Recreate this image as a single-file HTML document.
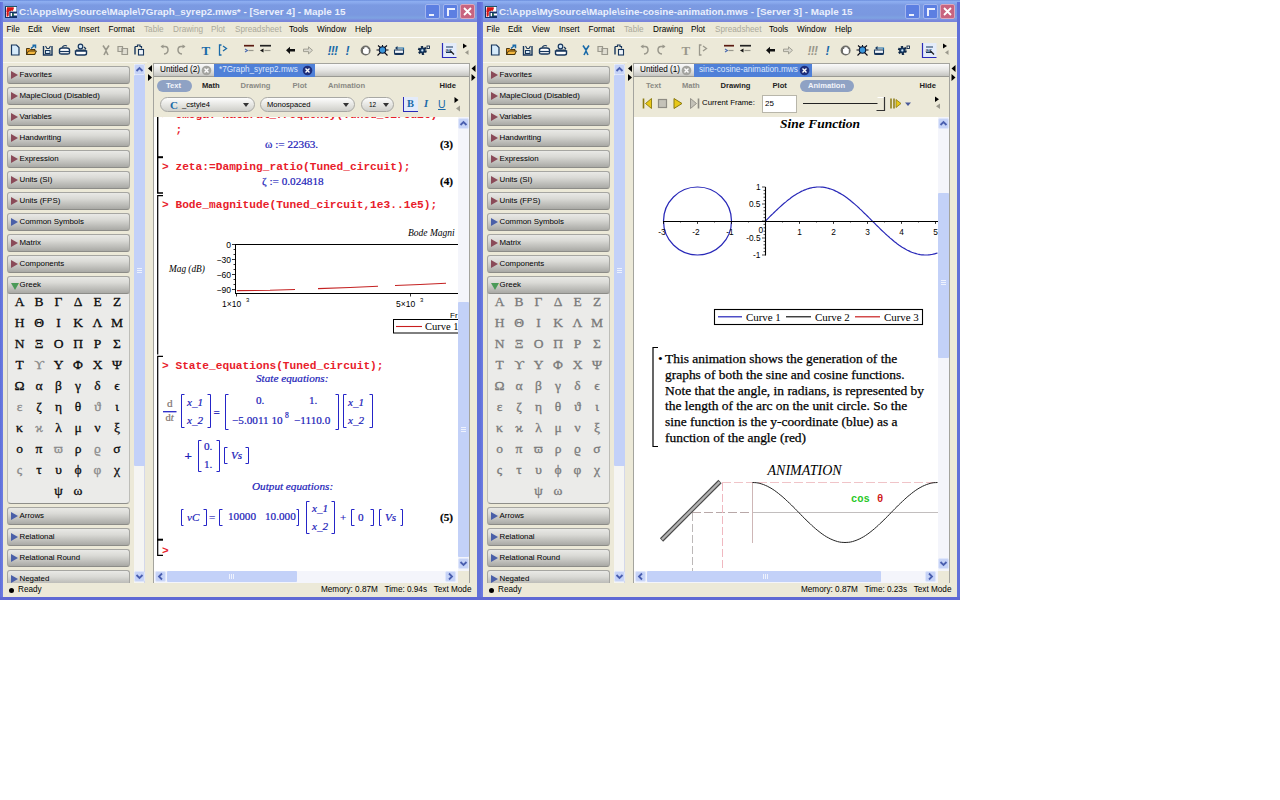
<!DOCTYPE html>
<html lang="en"><head><meta charset="utf-8"><title>Maple 15</title><style>
*{box-sizing:border-box;margin:0;padding:0}
html,body{width:1280px;height:800px;background:#fff;overflow:hidden}
body{position:relative;font-family:"Liberation Sans",sans-serif;font-size:8px;color:#000}
.win{position:absolute;top:0;width:480px;height:600px;background:#ece9d8;overflow:hidden}
.abs{position:absolute}
.title{position:absolute;left:0;top:0;width:480px;height:22px;background:linear-gradient(#6a8ddc 0,#8cadf0 1.5px,#88a8ec 3px,#7b9ae2 5px,#7a98e0 15px,#7ea3e2 18px,#7a88dc 20.500px,#7884da 22px)}
.bl{position:absolute;left:0;top:2px;width:3px;height:598px;background:linear-gradient(90deg,#5f6fd8,#6f7ee2)}
.br{position:absolute;left:477px;top:2px;width:3px;height:598px;background:#6070d8}
.bb{position:absolute;left:0;top:597px;width:480px;height:3px;background:#5f69d4}
.ttext{position:absolute;left:19px;top:6.4px;font:bold 9.9px "Liberation Sans",sans-serif;color:#e9effc;white-space:pre;line-height:12px}
.cbtn{position:absolute;top:4px;width:15px;height:15px;border:1px solid #a3b6ee;border-radius:2px;background:#5c7fe2}
.menu span{position:absolute;top:24px;font-size:8.2px;line-height:12px;white-space:pre}
.menu .g{color:#aaa89a}
.msep{position:absolute;left:3px;top:37px;width:474px;height:1px;background:#fdfdfb}
.pbtn{position:absolute;left:7px;width:123px;height:18px;border-radius:3px;border:1px solid #a6a6a2;border-bottom-color:#8c8c88;background:linear-gradient(#e9e9e6 0,#dadad6 35%,#bcbcb8 75%,#a9a9a5 100%);font-size:7.9px;line-height:16px;white-space:pre}
.pbtn i{position:absolute;left:3px;top:4px;width:0;height:0;border-left:7px solid #8a4a58;border-top:4px solid transparent;border-bottom:4px solid transparent}
.pbtn i.b{border-left-color:#4a5fa8}
.pbtn i.d{left:3px;top:6px;border-left:4px solid transparent;border-right:4px solid transparent;border-top:7px solid #4a9a58;border-bottom:0}
.pbtn b{position:absolute;left:11.5px;top:0;font-weight:normal}
.vs{position:absolute;width:11px;background:#f4f5fb}
.sbtn{position:absolute;width:11px;height:11px;background:#c6d3f7;border:1px solid #dfe6fb;border-radius:2px}
.thumb{position:absolute;background:#c3d1f8;border-radius:1px}
.g td{}
.gk{position:absolute;font:13.5px "Liberation Serif","DejaVu Serif",serif;line-height:14px;width:20px;text-align:center;color:#0c0c0c;-webkit-text-stroke:0.3px currentColor}
.doc{position:absolute;left:154px;top:116.500px;width:304px;height:454px;background:#fff;overflow:hidden}
.code{position:absolute;font:bold 11.2px "Liberation Mono",monospace;color:#e8202a;white-space:pre;line-height:13px}
.m{position:absolute;font:11.2px "Liberation Serif",serif;color:#2020b8;white-space:pre;line-height:13px;-webkit-text-stroke:0.2px currentColor}
.mi{font-style:italic}
.k{color:#000}
.ctx span{position:absolute;top:81.2px;font:bold 7.6px "Liberation Sans",sans-serif;line-height:10px;white-space:pre;color:#8a8a84}
.combo{position:absolute;top:97px;height:15px;border-radius:8px;border:1px solid #a8a8a4;background:linear-gradient(#fdfdfd,#e2e2de 60%,#cfcfca);font-size:7.6px;line-height:13px;white-space:pre}
.st{position:absolute;top:585px;font-size:8.2px;line-height:10px;white-space:pre}
</style></head><body>
<div class="win" style="left:0px">
<div class="title"></div><div class="bl"></div><div class="br"></div><div class="bb"></div>
<svg class="abs" style="left:4.5px;top:6px" width="12" height="12" viewBox="0 0 12 12"><rect width="12" height="12" rx="0.5" fill="#12306a"/><rect x="0.5" y="0" width="11" height="1" fill="#1a5a6a"/><rect x="1" y="1" width="10.5" height="10" fill="#fff"/><path d="M2 1.3 h6.5 l0.5 0.7 l-1.2 3.2 l-1-1 l-1 1.3 l-1.5-0.5 v1 l-1 0.5 l1 0.8 l-1 0.8 l1 0.8 l-1 0.8 v0.8 h-2 l0.6-0.8 l-0.6-0.8 l0.6-0.8 l-0.6-0.8 l0.6-0.8 l-0.6-0.8z" fill="#d41616"/><path d="M4.3 5.6 h7.7 v6.4 h-7.7z" fill="#12306a"/><path d="M5.6 7 h1.5 v3.2 h-1.5z M8.6 7.6 h3.4 v2 h-3.4z" fill="#fff"/><rect x="7.3" y="7.4" width="1.3" height="2.6" fill="#146a3a"/></svg>
<div class="ttext">C:\Apps\MySource\Maple\7Graph_syrep2.mws* - [Server 4] - Maple 15</div>
<div class="cbtn" style="left:425px"><div class="abs" style="left:3px;top:9px;width:5px;height:2px;background:#eef2fd"></div></div>
<div class="cbtn" style="left:443px"><div class="abs" style="left:3px;top:3px;width:8px;height:8px;border-left:2px solid #eef2fd;border-top:2px solid #eef2fd"></div></div>
<div class="cbtn" style="left:460px;background:#c8637f;border-color:#dca6bc"><svg class="abs" style="left:2px;top:2px" width="9" height="9" viewBox="0 0 9 9"><path d="M1 1L8 8M8 1L1 8" stroke="#fff" stroke-width="1.8"/></svg></div>
<div class="menu"><span style="left:6.5px">File</span><span style="left:28px">Edit</span><span style="left:52px">View</span><span style="left:79px">Insert</span><span style="left:108.5px">Format</span><span style="left:144px" class=g>Table</span><span style="left:173px" class=g>Drawing</span><span style="left:211px" class=g>Plot</span><span style="left:235px" class=g>Spreadsheet</span><span style="left:289px">Tools</span><span style="left:317px">Window</span><span style="left:355px">Help</span></div>
<div class="msep"></div>
<svg class="abs" style="left:0;top:38px" width="480" height="24" viewBox="0 38 480 24"><path d="M11.5 45 h5 l2.5 2.5 v7.5 h-7.5z" fill="#d6ebfa" stroke="#17365c" stroke-width="1.2"/><path d="M26.5 54.5 v-6 h3 l1 1 h4.5 v5z" fill="#e89a20" stroke="#3a2a08" stroke-width="0.9"/><path d="M26.5 54.5 l2-3.5 h8 l-2 3.5z" fill="#f4b840" stroke="#3a2a08" stroke-width="0.9"/><path d="M31 48.5 l3.5-3 M32.5 45.3 h3 v3" fill="none" stroke="#1a6aa8" stroke-width="1.5"/><path d="M43.5 46 v9 h8.5 v-9" fill="none" stroke="#17365c" stroke-width="1.4"/><path d="M45.5 46 l1.5 2.5 h2 l1.5-2.5" fill="none" stroke="#17365c" stroke-width="1.1"/><rect x="45.5" y="50.5" width="4.5" height="3" fill="#d6ebfa" stroke="#17365c" stroke-width="1"/><path d="M59.5 50 q0-2 3-2 h4 q3 0 3 2 v3 q0 1-2 1 h-6 q-2 0-2-1z" fill="#fff" stroke="#17365c" stroke-width="1.4"/><path d="M62 47.5 q2-3 5-1.5" fill="none" stroke="#17365c" stroke-width="1.2"/><path d="M60 51.5h10" stroke="#17365c" stroke-width="1.2"/><circle cx="80.5" cy="46.5" r="2.3" fill="#d6ebfa" stroke="#17365c" stroke-width="1.2"/><path d="M75.5 51 h11 v2.5 q0 1.5-2 1.5 h-7 q-2 0-2-1.5z" fill="#fff" stroke="#17365c" stroke-width="1.4"/><path d="M76 50.2h10" stroke="#17365c" stroke-width="1.4"/><path d="M84 47l2 2" stroke="#17365c" stroke-width="1.2"/><path d="M103 45.5 l3 4.5 l3-4.5 M106 50 v2 M106 51 l-2 4 M106 51 l2 4" fill="none" stroke="#9a988c" stroke-width="1.6"/><path d="M118 46.5 h4.5 v5 h-4.5z M122 48.5 h5.5 v6 h-5.5z" fill="#e0ded2" stroke="#9a988c" stroke-width="1.2"/><path d="M135 46.5 v8" stroke="#17365c" stroke-width="1.4"/><path d="M135 46.5 h2.5 v-1.5 h2.5 v1.5 h1.5 v2" fill="none" stroke="#17365c" stroke-width="1.2"/><rect x="138.5" y="49.5" width="5" height="5.5" fill="#eef4fa" stroke="#17365c" stroke-width="1.1"/><path d="M161.5 46.5 h3.5 q3 0 3 3.5 q0 3.5-4 4" fill="none" stroke="#9a988c" stroke-width="1.5"/><path d="M160.5 46.5 l3-2 v4z" fill="#9a988c"/><path d="M184.5 46.5 h-3.5 q-3 0-3 3.5 q0 3.5 4 4" fill="none" stroke="#9a988c" stroke-width="1.5"/><path d="M185.5 46.5 l-3-2 v4z" fill="#9a988c"/><text x="201.5" y="55" font-family="Liberation Serif,serif" font-weight="bold" font-size="13" fill="#1a6aa8">T</text><path d="M221.5 45 h-2 v10 h2 M223 46 l3.5 2.5 l-3.5 2.5" fill="none" stroke="#1a6aa8" stroke-width="1.3"/><path d="M244 45.7 h10" stroke="#5a1a10" stroke-width="1.7"/><path d="M245 49 l2.5 1.5 l-2.5 1.5" fill="none" stroke="#4a6ab0" stroke-width="1.1"/><path d="M248.5 50.5 h5" fill="none" stroke="#9a988c" stroke-width="1.2"/><path d="M260 45.7 h11" stroke="#222" stroke-width="1.7"/><path d="M263.5 48.5 l-3.5 2 l3.5 2z" fill="#111"/><path d="M264.5 50.5 h6" fill="none" stroke="#9a988c" stroke-width="1.2"/><path d="M286 50.3 l4-3.5 v2.3 h5 v2.5 h-5 v2.3z" fill="#111"/><path d="M312.5 50.3 l-4-3.5 v2.3 h-5 v2.5 h5 v2.3z" fill="#dcdad0" stroke="#9a988c" stroke-width="0.9"/><text x="327.5" y="54.5" font-family="Liberation Sans,sans-serif" font-weight="bold" font-style="italic" font-size="12" fill="#1a6aa8" letter-spacing="-0.8">!!!</text><text x="345.5" y="54.5" font-family="Liberation Sans,sans-serif" font-weight="bold" font-style="italic" font-size="12" fill="#1a6aa8">!</text><circle cx="365.6" cy="50.5" r="5" fill="#6e6e6a"/><path d="M363 52.5 v-3.5 h1.2 v-1.5 h1.2 v-0.5 h1.2 v0.7 h1.2 v1.3 h1 v3.5 q0 1.5-2.5 1.5 q-2.3 0-3.3-1.5z" fill="#fff"/><path d="M378 45.5l3 2.5M387 45.5l-3 2.5M376.5 50h3M385.5 50h3M377.5 55.5l3-3M387.5 55.5l-3-3M382.5 45v2" stroke="#0a0a14" stroke-width="1.1"/><circle cx="382.5" cy="50" r="3.2" fill="#3c98dc" stroke="#0a1a3a" stroke-width="1.1"/><path d="M394.5 50 h9 v3 q0 1.5-1.5 1.5 h-6 q-1.5 0-1.5-1.5z" fill="#f2f6fa" stroke="#17365c" stroke-width="1.1"/><path d="M394.5 53.8 h9" stroke="#17365c" stroke-width="1.8"/><path d="M396 48 h7.5 v2" fill="none" stroke="#1a6aa8" stroke-width="1.2"/><path d="M395 48 l2.5-2 v4z" fill="#17365c"/><circle cx="422.3" cy="50.4" r="3.1" fill="none" stroke="#0e2646" stroke-width="2.8" stroke-dasharray="1.9 1.35"/><circle cx="422.3" cy="50.4" r="2.7" fill="#16406e" stroke="#0e2646" stroke-width="1"/><circle cx="422.3" cy="50.4" r="1.1" fill="#cfe2f2"/><rect x="427" y="46" width="2.5" height="2.5" fill="#f4f4ee" stroke="#0e2646" stroke-width="0.9"/><rect x="442.5" y="43" width="14" height="14" fill="#e4ecfa"/><path d="M442.5 43 v14.5 h14" fill="none" stroke="#2a2ab8" stroke-width="1.2"/><path d="M446 47h7M446 52.5h6" stroke="#17365c" stroke-width="1"/><text x="445.5" y="52" font-family="Liberation Sans,sans-serif" font-size="6" fill="#17365c">ac</text><path d="M450 50.5 l4 4" stroke="#222" stroke-width="1.3"/><path d="M463 43.5 v5 l4-2.5z" fill="#000"/><path d="M468.5 50 v5 l-3.5-2.5z" fill="#9a988c"/></svg>
<div class="abs" style="left:3px;top:62px;width:144px;height:521px;overflow:hidden"><div class="abs" style="left:0;top:0;width:144px;height:1px;background:#f8f6ee"></div>
<div class="abs" style="left:-3px;top:-62px;width:150px;height:645px">
<div class="abs" style="left:7px;top:290px;width:123px;height:213.5px;background:#ebebe9;border:1px solid #bdbdb8;border-bottom-color:#8e8e8a;border-radius:0 0 4px 4px"></div>
<div class="pbtn" style="top:66px"><i class=""></i><b>Favorites</b></div>
<div class="pbtn" style="top:87px"><i class=""></i><b>MapleCloud (Disabled)</b></div>
<div class="pbtn" style="top:108px"><i class=""></i><b>Variables</b></div>
<div class="pbtn" style="top:129px"><i class=""></i><b>Handwriting</b></div>
<div class="pbtn" style="top:150px"><i class=""></i><b>Expression</b></div>
<div class="pbtn" style="top:171px"><i class=""></i><b>Units (SI)</b></div>
<div class="pbtn" style="top:192px"><i class=""></i><b>Units (FPS)</b></div>
<div class="pbtn" style="top:213px"><i class="b"></i><b>Common Symbols</b></div>
<div class="pbtn" style="top:234px"><i class=""></i><b>Matrix</b></div>
<div class="pbtn" style="top:255px"><i class=""></i><b>Components</b></div>
<div class="pbtn" style="top:276px"><i class="d"></i><b>Greek</b></div>
<div class="pbtn" style="top:507px"><i class="b"></i><b>Arrows</b></div>
<div class="pbtn" style="top:528px"><i class="b"></i><b>Relational</b></div>
<div class="pbtn" style="top:549px"><i class="b"></i><b>Relational Round</b></div>
<div class="pbtn" style="top:570px"><i class="b"></i><b>Negated</b></div>
<span class="gk" style="left:9.5px;top:294.9px">Α</span>
<span class="gk" style="left:29px;top:294.9px">Β</span>
<span class="gk" style="left:48.5px;top:294.9px">Γ</span>
<span class="gk" style="left:68px;top:294.9px">Δ</span>
<span class="gk" style="left:87.5px;top:294.9px">Ε</span>
<span class="gk" style="left:107px;top:294.9px">Ζ</span>
<span class="gk" style="left:9.5px;top:315.9px">Η</span>
<span class="gk" style="left:29px;top:315.9px">Θ</span>
<span class="gk" style="left:48.5px;top:315.9px">Ι</span>
<span class="gk" style="left:68px;top:315.9px">Κ</span>
<span class="gk" style="left:87.5px;top:315.9px">Λ</span>
<span class="gk" style="left:107px;top:315.9px">Μ</span>
<span class="gk" style="left:9.5px;top:336.9px">Ν</span>
<span class="gk" style="left:29px;top:336.9px">Ξ</span>
<span class="gk" style="left:48.5px;top:336.9px">Ο</span>
<span class="gk" style="left:68px;top:336.9px">Π</span>
<span class="gk" style="left:87.5px;top:336.9px">Ρ</span>
<span class="gk" style="left:107px;top:336.9px">Σ</span>
<span class="gk" style="left:9.5px;top:357.9px">Τ</span>
<span class="gk" style="left:29px;top:357.9px;color:#8a8a8a">ϒ</span>
<span class="gk" style="left:48.5px;top:357.9px">Υ</span>
<span class="gk" style="left:68px;top:357.9px">Φ</span>
<span class="gk" style="left:87.5px;top:357.9px">Χ</span>
<span class="gk" style="left:107px;top:357.9px">Ψ</span>
<span class="gk" style="left:9.5px;top:378.9px">Ω</span>
<span class="gk" style="left:29px;top:378.9px">α</span>
<span class="gk" style="left:48.5px;top:378.9px">β</span>
<span class="gk" style="left:68px;top:378.9px">γ</span>
<span class="gk" style="left:87.5px;top:378.9px">δ</span>
<span class="gk" style="left:107px;top:378.9px">ϵ</span>
<span class="gk" style="left:9.5px;top:399.9px;color:#8a8a8a">ε</span>
<span class="gk" style="left:29px;top:399.9px">ζ</span>
<span class="gk" style="left:48.5px;top:399.9px">η</span>
<span class="gk" style="left:68px;top:399.9px">θ</span>
<span class="gk" style="left:87.5px;top:399.9px;color:#8a8a8a">ϑ</span>
<span class="gk" style="left:107px;top:399.9px">ι</span>
<span class="gk" style="left:9.5px;top:420.9px">κ</span>
<span class="gk" style="left:29px;top:420.9px;color:#8a8a8a">ϰ</span>
<span class="gk" style="left:48.5px;top:420.9px">λ</span>
<span class="gk" style="left:68px;top:420.9px">μ</span>
<span class="gk" style="left:87.5px;top:420.9px">ν</span>
<span class="gk" style="left:107px;top:420.9px">ξ</span>
<span class="gk" style="left:9.5px;top:441.9px">ο</span>
<span class="gk" style="left:29px;top:441.9px">π</span>
<span class="gk" style="left:48.5px;top:441.9px;color:#8a8a8a">ϖ</span>
<span class="gk" style="left:68px;top:441.9px">ρ</span>
<span class="gk" style="left:87.5px;top:441.9px;color:#8a8a8a">ϱ</span>
<span class="gk" style="left:107px;top:441.9px">σ</span>
<span class="gk" style="left:9.5px;top:462.9px;color:#8a8a8a">ς</span>
<span class="gk" style="left:29px;top:462.9px">τ</span>
<span class="gk" style="left:48.5px;top:462.9px">υ</span>
<span class="gk" style="left:68px;top:462.9px">ϕ</span>
<span class="gk" style="left:87.5px;top:462.9px;color:#8a8a8a">φ</span>
<span class="gk" style="left:107px;top:462.9px">χ</span>
<span class="gk" style="left:48.5px;top:483.9px">ψ</span>
<span class="gk" style="left:68px;top:483.9px">ω</span>
</div></div>
<div class="vs" style="left:134px;top:64px;height:519px;background:#f5f5f3;border-right:1px solid #d4d8ea"></div>
<div class="thumb" style="left:134px;top:75px;width:11px;height:391px"></div>
<div class="sbtn" style="left:134px;top:64px"></div><svg class="abs" style="left:134px;top:64px" width="11" height="11" viewBox="0 0 11 11"><path d="M2.5 7 L5.5 4 L8.5 7" fill="none" stroke="#4a5fb0" stroke-width="1.8"/></svg>
<div class="sbtn" style="left:134px;top:571px"></div><svg class="abs" style="left:134px;top:571px" width="11" height="11" viewBox="0 0 11 11"><path d="M2.5 4 L5.5 7 L8.5 4" fill="none" stroke="#4a5fb0" stroke-width="1.8"/></svg>
<div class="abs" style="left:137px;top:268px;width:5px;height:1px;background:#eef2fd;box-shadow:0 2px 0 #eef2fd,0 4px 0 #eef2fd"></div>
<svg class="abs" style="left:147px;top:64px" width="6" height="20" viewBox="0 0 6 20"><path d="M5 1v7l-4-3.5z M1 10v7l4-3.5z" fill="#000"/></svg>
<svg class="abs" style="left:470px;top:64px" width="7" height="20" viewBox="0 0 7 20"><path d="M5.5 1v7l-4-3.5z M1.5 10v7l4-3.5z" fill="#000"/></svg>
<div class="abs" style="left:153px;top:63px;width:317px;height:520px;border:1px solid #a4a49e;border-bottom:0;background:#ece9d8"></div>
<div class="abs" style="left:154px;top:64px;width:315px;height:13px;background:linear-gradient(#fafafa,#e6e6e4 50%,#c4c4c0);border-bottom:1px solid #9a9a94"></div>
<div class="abs" style="left:155px;top:64px;width:59px;height:13px;font-size:8.2px;line-height:12px;padding-left:5px;white-space:pre">Untitled (2)</div>
<svg class="abs" style="left:201px;top:65px" width="11" height="11" viewBox="0 0 11 11"><circle cx="5.5" cy="5.5" r="4.8" fill="#a4a4a0"/><path d="M3.5 3.5l4 4M7.5 3.5l-4 4" stroke="#fff" stroke-width="1.4"/></svg>
<div class="abs" style="left:214px;top:64px;width:101px;height:13px;background:#4f80d8;color:#dfe8fa;font-size:8.2px;line-height:12px;padding-left:5px;white-space:pre">*7Graph_syrep2.mws</div>
<svg class="abs" style="left:302px;top:65px" width="11" height="11" viewBox="0 0 11 11"><circle cx="5.5" cy="5.5" r="4.8" fill="#1e2e7a"/><path d="M3.5 3.5l4 4M7.5 3.5l-4 4" stroke="#fff" stroke-width="1.4"/></svg>
<div class="abs" style="left:157px;top:80px;width:35px;height:12px;border-radius:6px;background:#8fa2c4"></div>
<div class="ctx"><span style="left:166px;color:#f2f4fa">Text</span><span style="left:202px;color:#222">Math</span><span style="left:240.5px;">Drawing</span><span style="left:292.5px;">Plot</span><span style="left:328px;">Animation</span><span style="left:439.5px;color:#222">Hide</span></div>
<div class="abs" style="left:154px;top:116.5px;width:315px;height:466.5px;background:#fff"></div>
<div class="vs" style="left:458px;top:117px;height:454px"></div>
<div class="sbtn" style="left:458px;top:118px"></div><svg class="abs" style="left:458px;top:118px" width="11" height="11" viewBox="0 0 11 11"><path d="M2.5 7 L5.5 4 L8.5 7" fill="none" stroke="#4a5fb0" stroke-width="1.8"/></svg>
<div class="sbtn" style="left:458px;top:558px"></div><svg class="abs" style="left:458px;top:558px" width="11" height="11" viewBox="0 0 11 11"><path d="M2.5 4 L5.5 7 L8.5 4" fill="none" stroke="#4a5fb0" stroke-width="1.8"/></svg>
<div class="abs" style="left:154px;top:571px;width:304px;height:12px;background:#f4f5fb"></div>
<div class="abs" style="left:458px;top:571px;width:11px;height:12px;background:#ece9d8"></div>
<div class="sbtn" style="left:155px;top:571px"></div><svg class="abs" style="left:155px;top:571px" width="11" height="11" viewBox="0 0 11 11"><path d="M7 2.5 L4 5.5 L7 8.5" fill="none" stroke="#4a5fb0" stroke-width="1.8"/></svg>
<div class="sbtn" style="left:445px;top:571px"></div><svg class="abs" style="left:445px;top:571px" width="11" height="11" viewBox="0 0 11 11"><path d="M4 2.5 L7 5.5 L4 8.5" fill="none" stroke="#4a5fb0" stroke-width="1.8"/></svg>
<div class="combo" style="left:160px;width:95px"><span class="abs" style="left:9px;top:0.5px;font:bold 11px 'Liberation Serif',serif;color:#1a6aa8">C</span><span class="abs" style="left:21px;top:0">_cstyle4</span><span class="abs" style="left:82px;top:5px;border-top:4px solid #333;border-left:3.5px solid transparent;border-right:3.5px solid transparent"></span></div>
<div class="combo" style="left:260px;width:95px"><span class="abs" style="left:6px;top:0">Monospaced</span><span class="abs" style="left:82px;top:5px;border-top:4px solid #333;border-left:3.5px solid transparent;border-right:3.5px solid transparent"></span></div>
<div class="combo" style="left:361px;width:33px"><span class="abs" style="left:7px;top:0;font-size:6.5px">12</span><span class="abs" style="left:21px;top:5px;border-top:4px solid #333;border-left:3.5px solid transparent;border-right:3.5px solid transparent"></span></div>
<div class="abs" style="left:403px;top:97px;width:15px;height:15px;background:#e3ebfa;border-left:1px solid #2a2ab8;border-bottom:1px solid #2a2ab8"></div>
<span class="abs" style="left:407px;top:98px;font:bold 10.5px 'Liberation Serif',serif;color:#1a6aa8;line-height:12px">B</span>
<span class="abs" style="left:424px;top:98px;font:italic bold 10.5px 'Liberation Serif',serif;color:#1a6aa8;line-height:12px">I</span>
<span class="abs" style="left:438px;top:98px;font:10.5px 'Liberation Sans',sans-serif;color:#1a6aa8;line-height:12px;text-decoration:underline">U</span>
<svg class="abs" style="left:452px;top:96px" width="10" height="18" viewBox="0 0 10 18"><path d="M2.5 1v6l4-3z" fill="#000"/><path d="M8 9.5v6l-4-3z" fill="#9a988c"/></svg>
<div class="doc"><div class="abs" style="left:-154px;top:-116.5px;width:480px;height:600px">
<span class="code" style="left:162px;top:109px">&gt; omega:=Natural_frequency(Tuned_circuit)</span>
<span class="code" style="left:175.5px;top:123.5px">;</span>
<span class="m " style="left:265px;top:137.8px;">ω := 22363.</span>
<span class="m k" style="left:440px;top:137.8px;"><b>(3)</b></span>
<span class="code" style="left:162px;top:160.5px">&gt; zeta:=Damping_ratio(Tuned_circuit);</span>
<span class="m " style="left:262px;top:174.8px;">ζ := 0.024818</span>
<span class="m k" style="left:440px;top:174.8px;"><b>(4)</b></span>
<span class="code" style="left:162px;top:198.5px">&gt; Bode_magnitude(Tuned_circuit,1e3..1e5);</span>
<svg class="abs" style="left:155px;top:117px" width="20" height="454" viewBox="155 117 20 454"><g fill="none" stroke="#000" stroke-width="1.2"><path d="M157.7 116 V193 h5.3" stroke-width="1.4"/><path d="M157 157.2 h6" stroke-width="2"/><path d="M163 195.7 h-5.3 V354.6"/><path d="M163 356.4 h-5.3 V555.3 h5.3"/><path d="M157 539.7 h6" stroke-width="2"/></g></svg>
<svg class="abs" style="left:155px;top:220px" width="303" height="125" viewBox="155 220 303 125" font-family="Liberation Serif,serif"><text x="408" y="236" font-size="9.5" font-style="italic">Bode Magni</text><path d="M235.5 244.5 H458" stroke="#000" stroke-width="1.2"/><path d="M235.5 244 V294 M235 293.5 H458" stroke="#000" stroke-width="1"/><path d="M232 244.5h3.5M232 259.5h3.5M232 274.5h3.5M232 289.5h3.5M233.5 249.5h2M233.5 254.5h2M233.5 264.5h2M233.5 269.5h2M233.5 279.5h2M233.5 284.5h2M236.5 293.5v3M410.5 293.5v3" stroke="#000" stroke-width="0.8"/><g font-family="Liberation Sans,sans-serif" font-size="8.6" text-anchor="end"><text x="231" y="248">0</text><text x="231" y="263">−30</text><text x="231" y="278">−60</text><text x="231" y="293">−90</text></g><text x="169" y="271.5" font-size="9.3" font-style="italic">Mag (dB)</text><path d="M237 290.6 L270 290.3 L295 289.5 M318 288.6 L350 287.5 L378 286.3 M395 285.5 L420 284.5 L446 283.3" fill="none" stroke="#c42222" stroke-width="1.1"/><g font-family="Liberation Sans,sans-serif" font-size="8.5"><text x="222" y="307">1×10</text><text x="246" y="302" font-size="6">3</text><text x="396" y="307">5×10</text><text x="420" y="302" font-size="6">3</text></g><text x="450" y="318" font-size="8" font-family="Liberation Sans,sans-serif">Fr</text><rect x="393.5" y="319.5" width="70" height="13.5" fill="#fff" stroke="#000" stroke-width="1"/><path d="M396 326.5h26" stroke="#c81e1e" stroke-width="1.1"/><text x="425" y="330" font-size="10.5">Curve 1</text></svg>
<span class="code" style="left:162px;top:359.5px">&gt; State_equations(Tuned_circuit);</span>
<span class="m mi" style="left:256px;top:371.8px;">State equations:</span>
<svg class="abs" style="left:155px;top:390px" width="303" height="150" viewBox="155 390 303 150"><g fill="none" stroke="#2525c8" stroke-width="1"><path d="M184.5 394.5 h-3 V427.5 h3"/><path d="M207.5 394.5 h3 V427.5 h-3"/><path d="M228.5 394.5 h-3 V429.5 h3"/><path d="M335.5 394.5 h3 V429.5 h-3"/><path d="M346.5 394.5 h-3 V427.5 h3"/><path d="M369.5 394.5 h3 V427.5 h-3"/><path d="M201.5 440.5 h-3 V471.5 h3"/><path d="M216.5 440.5 h3 V471.5 h-3"/><path d="M227.5 447.5 h-3 V463.5 h3"/><path d="M245.5 447.5 h3 V463.5 h-3"/><path d="M183.5 509.5 h-2 V525.5 h2"/><path d="M203.5 509.5 h3 V525.5 h-3"/><path d="M222.5 509.5 h-3 V525.5 h3"/><path d="M296.5 509.5 h2 V525.5 h-2"/><path d="M309.5 501.5 h-3 V533.5 h3"/><path d="M331.5 501.5 h3 V533.5 h-3"/><path d="M354.5 509.5 h-3 V525.5 h3"/><path d="M370.5 509.5 h3 V525.5 h-3"/><path d="M381.5 509.5 h-2 V525.5 h2"/><path d="M400.5 509.5 h2 V525.5 h-2"/><path d="M163 411.7h13.5" stroke-width="1.3"/></g></svg>
<span class="m " style="left:167px;top:397.1px;color:#807470">d</span>
<span class="m " style="left:165.5px;top:411.3px;color:#807470;font-size:10.5px">d<i>t</i></span>
<span class="m mi" style="left:187px;top:395.8px;">x_1</span>
<span class="m mi" style="left:187px;top:413.8px;">x_2</span>
<span class="m " style="left:213.5px;top:405.8px;font-weight:bold">=</span>
<span class="m " style="left:256px;top:393.8px;">0.</span>
<span class="m " style="left:309px;top:393.8px;">1.</span>
<span class="m " style="left:232px;top:413.8px;">−5.0011 10</span>
<span class="m " style="left:285px;top:408.8px;font-size:7.5px">8</span>
<span class="m " style="left:294px;top:413.8px;">−1110.0</span>
<span class="m mi" style="left:348px;top:395.8px;">x_1</span>
<span class="m mi" style="left:348px;top:413.8px;">x_2</span>
<span class="m " style="left:184.5px;top:448.8px;font-size:13px;font-weight:bold">+</span>
<span class="m " style="left:204px;top:439.8px;">0.</span>
<span class="m " style="left:204px;top:457.8px;">1.</span>
<span class="m mi" style="left:231px;top:448.8px;">Vs</span>
<span class="m mi" style="left:252px;top:479.8px;">Output equations:</span>
<span class="m mi" style="left:187px;top:510.8px;">vC</span>
<span class="m " style="left:209px;top:510.8px;">=</span>
<span class="m " style="left:228px;top:510.3px;">10000</span>
<span class="m " style="left:265px;top:510.3px;">10.000</span>
<span class="m mi" style="left:312px;top:501.8px;">x_1</span>
<span class="m mi" style="left:312px;top:519.8px;">x_2</span>
<span class="m " style="left:340px;top:510.8px;">+</span>
<span class="m " style="left:358px;top:510.8px;">0</span>
<span class="m mi" style="left:385px;top:510.8px;">Vs</span>
<span class="m k" style="left:440px;top:510.8px;"><b>(5)</b></span>
<span class="code" style="left:162px;top:544.5px">&gt;</span>
</div></div>
<div class="thumb" style="left:458px;top:302px;width:11px;height:255px"></div>
<div class="abs" style="left:461px;top:427px;width:5px;height:1px;background:#eef2fd;box-shadow:0 2px 0 #eef2fd,0 4px 0 #eef2fd"></div>
<div class="thumb" style="left:167px;top:571px;width:130px;height:11px"></div>
<div class="abs" style="left:229px;top:574px;width:1px;height:5px;background:#eef2fd;box-shadow:2px 0 0 #eef2fd,4px 0 0 #eef2fd"></div>
<div class="abs" style="left:3px;top:583px;width:474px;height:14px;background:#ece9d8"></div>
<div class="abs" style="left:9px;top:588.3px;width:5px;height:5px;border-radius:3px;background:#000"></div>
<span class="st" style="left:18px">Ready</span>
<span class="st" style="left:321px">Memory: 0.87M   Time: 0.94s   Text Mode</span>
</div>
<div class="win" style="left:480px">
<div class="title"></div><div class="bl"></div><div class="br"></div><div class="bb"></div>
<svg class="abs" style="left:4.5px;top:6px" width="12" height="12" viewBox="0 0 12 12"><rect width="12" height="12" rx="0.5" fill="#12306a"/><rect x="0.5" y="0" width="11" height="1" fill="#1a5a6a"/><rect x="1" y="1" width="10.5" height="10" fill="#fff"/><path d="M2 1.3 h6.5 l0.5 0.7 l-1.2 3.2 l-1-1 l-1 1.3 l-1.5-0.5 v1 l-1 0.5 l1 0.8 l-1 0.8 l1 0.8 l-1 0.8 v0.8 h-2 l0.6-0.8 l-0.6-0.8 l0.6-0.8 l-0.6-0.8 l0.6-0.8 l-0.6-0.8z" fill="#d41616"/><path d="M4.3 5.6 h7.7 v6.4 h-7.7z" fill="#12306a"/><path d="M5.6 7 h1.5 v3.2 h-1.5z M8.6 7.6 h3.4 v2 h-3.4z" fill="#fff"/><rect x="7.3" y="7.4" width="1.3" height="2.6" fill="#146a3a"/></svg>
<div class="ttext" style=font-size:9.83px>C:\Apps\MySource\Maple\sine-cosine-animation.mws - [Server 3] - Maple 15</div>
<div class="cbtn" style="left:425px"><div class="abs" style="left:3px;top:9px;width:5px;height:2px;background:#eef2fd"></div></div>
<div class="cbtn" style="left:443px"><div class="abs" style="left:3px;top:3px;width:8px;height:8px;border-left:2px solid #eef2fd;border-top:2px solid #eef2fd"></div></div>
<div class="cbtn" style="left:460px;background:#c8637f;border-color:#dca6bc"><svg class="abs" style="left:2px;top:2px" width="9" height="9" viewBox="0 0 9 9"><path d="M1 1L8 8M8 1L1 8" stroke="#fff" stroke-width="1.8"/></svg></div>
<div class="menu"><span style="left:6.5px">File</span><span style="left:28px">Edit</span><span style="left:52px">View</span><span style="left:79px">Insert</span><span style="left:108.5px">Format</span><span style="left:144px" class=g>Table</span><span style="left:173px">Drawing</span><span style="left:211px">Plot</span><span style="left:235px" class=g>Spreadsheet</span><span style="left:289px">Tools</span><span style="left:317px">Window</span><span style="left:355px">Help</span></div>
<div class="msep"></div>
<svg class="abs" style="left:0;top:38px" width="480" height="24" viewBox="0 38 480 24"><path d="M11.5 45 h5 l2.5 2.5 v7.5 h-7.5z" fill="#d6ebfa" stroke="#17365c" stroke-width="1.2"/><path d="M26.5 54.5 v-6 h3 l1 1 h4.5 v5z" fill="#e89a20" stroke="#3a2a08" stroke-width="0.9"/><path d="M26.5 54.5 l2-3.5 h8 l-2 3.5z" fill="#f4b840" stroke="#3a2a08" stroke-width="0.9"/><path d="M31 48.5 l3.5-3 M32.5 45.3 h3 v3" fill="none" stroke="#1a6aa8" stroke-width="1.5"/><path d="M43.5 46 v9 h8.5 v-9" fill="none" stroke="#17365c" stroke-width="1.4"/><path d="M45.5 46 l1.5 2.5 h2 l1.5-2.5" fill="none" stroke="#17365c" stroke-width="1.1"/><rect x="45.5" y="50.5" width="4.5" height="3" fill="#d6ebfa" stroke="#17365c" stroke-width="1"/><path d="M59.5 50 q0-2 3-2 h4 q3 0 3 2 v3 q0 1-2 1 h-6 q-2 0-2-1z" fill="#fff" stroke="#17365c" stroke-width="1.4"/><path d="M62 47.5 q2-3 5-1.5" fill="none" stroke="#17365c" stroke-width="1.2"/><path d="M60 51.5h10" stroke="#17365c" stroke-width="1.2"/><circle cx="80.5" cy="46.5" r="2.3" fill="#d6ebfa" stroke="#17365c" stroke-width="1.2"/><path d="M75.5 51 h11 v2.5 q0 1.5-2 1.5 h-7 q-2 0-2-1.5z" fill="#fff" stroke="#17365c" stroke-width="1.4"/><path d="M76 50.2h10" stroke="#17365c" stroke-width="1.4"/><path d="M84 47l2 2" stroke="#17365c" stroke-width="1.2"/><path d="M103 45.5 l3 4.5 l3-4.5 M106 50 v2 M106 51 l-2 4 M106 51 l2 4" fill="none" stroke="#1a6aa8" stroke-width="1.6"/><path d="M118 46.5 h4.5 v5 h-4.5z M122 48.5 h5.5 v6 h-5.5z" fill="#e0ded2" stroke="#9a988c" stroke-width="1.2"/><path d="M135 46.5 v8" stroke="#17365c" stroke-width="1.4"/><path d="M135 46.5 h2.5 v-1.5 h2.5 v1.5 h1.5 v2" fill="none" stroke="#17365c" stroke-width="1.2"/><rect x="138.5" y="49.5" width="5" height="5.5" fill="#eef4fa" stroke="#17365c" stroke-width="1.1"/><path d="M161.5 46.5 h3.5 q3 0 3 3.5 q0 3.5-4 4" fill="none" stroke="#9a988c" stroke-width="1.5"/><path d="M160.5 46.5 l3-2 v4z" fill="#9a988c"/><path d="M184.5 46.5 h-3.5 q-3 0-3 3.5 q0 3.5 4 4" fill="none" stroke="#9a988c" stroke-width="1.5"/><path d="M185.5 46.5 l-3-2 v4z" fill="#9a988c"/><text x="201.5" y="55" font-family="Liberation Serif,serif" font-weight="bold" font-size="13" fill="#9a988c">T</text><path d="M221.5 45 h-2 v10 h2 M223 46 l3.5 2.5 l-3.5 2.5" fill="none" stroke="#9a988c" stroke-width="1.3"/><path d="M244 45.7 h10" stroke="#5a1a10" stroke-width="1.7"/><path d="M245 49 l2.5 1.5 l-2.5 1.5" fill="none" stroke="#4a6ab0" stroke-width="1.1"/><path d="M248.5 50.5 h5" fill="none" stroke="#9a988c" stroke-width="1.2"/><path d="M260 45.7 h11" stroke="#222" stroke-width="1.7"/><path d="M263.5 48.5 l-3.5 2 l3.5 2z" fill="#111"/><path d="M264.5 50.5 h6" fill="none" stroke="#9a988c" stroke-width="1.2"/><path d="M286 50.3 l4-3.5 v2.3 h5 v2.5 h-5 v2.3z" fill="#111"/><path d="M312.5 50.3 l-4-3.5 v2.3 h-5 v2.5 h5 v2.3z" fill="#dcdad0" stroke="#9a988c" stroke-width="0.9"/><text x="327.5" y="54.5" font-family="Liberation Sans,sans-serif" font-weight="bold" font-style="italic" font-size="12" fill="#9a988c" letter-spacing="-0.8">!!!</text><text x="345.5" y="54.5" font-family="Liberation Sans,sans-serif" font-weight="bold" font-style="italic" font-size="12" fill="#1a6aa8">!</text><circle cx="365.6" cy="50.5" r="5" fill="#6e6e6a"/><path d="M363 52.5 v-3.5 h1.2 v-1.5 h1.2 v-0.5 h1.2 v0.7 h1.2 v1.3 h1 v3.5 q0 1.5-2.5 1.5 q-2.3 0-3.3-1.5z" fill="#fff"/><path d="M378 45.5l3 2.5M387 45.5l-3 2.5M376.5 50h3M385.5 50h3M377.5 55.5l3-3M387.5 55.5l-3-3M382.5 45v2" stroke="#0a0a14" stroke-width="1.1"/><circle cx="382.5" cy="50" r="3.2" fill="#3c98dc" stroke="#0a1a3a" stroke-width="1.1"/><path d="M394.5 50 h9 v3 q0 1.5-1.5 1.5 h-6 q-1.5 0-1.5-1.5z" fill="#f2f6fa" stroke="#17365c" stroke-width="1.1"/><path d="M394.5 53.8 h9" stroke="#17365c" stroke-width="1.8"/><path d="M396 48 h7.5 v2" fill="none" stroke="#1a6aa8" stroke-width="1.2"/><path d="M395 48 l2.5-2 v4z" fill="#17365c"/><circle cx="422.3" cy="50.4" r="3.1" fill="none" stroke="#0e2646" stroke-width="2.8" stroke-dasharray="1.9 1.35"/><circle cx="422.3" cy="50.4" r="2.7" fill="#16406e" stroke="#0e2646" stroke-width="1"/><circle cx="422.3" cy="50.4" r="1.1" fill="#cfe2f2"/><rect x="427" y="46" width="2.5" height="2.5" fill="#f4f4ee" stroke="#0e2646" stroke-width="0.9"/><rect x="442.5" y="43" width="14" height="14" fill="#e4ecfa"/><path d="M442.5 43 v14.5 h14" fill="none" stroke="#2a2ab8" stroke-width="1.2"/><path d="M446 47h7M446 52.5h6" stroke="#17365c" stroke-width="1"/><text x="445.5" y="52" font-family="Liberation Sans,sans-serif" font-size="6" fill="#17365c">ac</text><path d="M450 50.5 l4 4" stroke="#222" stroke-width="1.3"/><path d="M463 43.5 v5 l4-2.5z" fill="#000"/><path d="M468.5 50 v5 l-3.5-2.5z" fill="#9a988c"/></svg>
<div class="abs" style="left:3px;top:62px;width:144px;height:521px;overflow:hidden"><div class="abs" style="left:0;top:0;width:144px;height:1px;background:#f8f6ee"></div>
<div class="abs" style="left:-3px;top:-62px;width:150px;height:645px">
<div class="abs" style="left:7px;top:290px;width:123px;height:213.5px;background:#ebebe9;border:1px solid #bdbdb8;border-bottom-color:#8e8e8a;border-radius:0 0 4px 4px"></div>
<div class="pbtn" style="top:66px"><i class=""></i><b>Favorites</b></div>
<div class="pbtn" style="top:87px"><i class=""></i><b>MapleCloud (Disabled)</b></div>
<div class="pbtn" style="top:108px"><i class=""></i><b>Variables</b></div>
<div class="pbtn" style="top:129px"><i class=""></i><b>Handwriting</b></div>
<div class="pbtn" style="top:150px"><i class=""></i><b>Expression</b></div>
<div class="pbtn" style="top:171px"><i class=""></i><b>Units (SI)</b></div>
<div class="pbtn" style="top:192px"><i class=""></i><b>Units (FPS)</b></div>
<div class="pbtn" style="top:213px"><i class="b"></i><b>Common Symbols</b></div>
<div class="pbtn" style="top:234px"><i class=""></i><b>Matrix</b></div>
<div class="pbtn" style="top:255px"><i class=""></i><b>Components</b></div>
<div class="pbtn" style="top:276px"><i class="d"></i><b>Greek</b></div>
<div class="pbtn" style="top:507px"><i class="b"></i><b>Arrows</b></div>
<div class="pbtn" style="top:528px"><i class="b"></i><b>Relational</b></div>
<div class="pbtn" style="top:549px"><i class="b"></i><b>Relational Round</b></div>
<div class="pbtn" style="top:570px"><i class="b"></i><b>Negated</b></div>
<span class="gk" style="left:9.5px;top:294.9px;color:#7a7a7a">Α</span>
<span class="gk" style="left:29px;top:294.9px;color:#7a7a7a">Β</span>
<span class="gk" style="left:48.5px;top:294.9px;color:#7a7a7a">Γ</span>
<span class="gk" style="left:68px;top:294.9px;color:#7a7a7a">Δ</span>
<span class="gk" style="left:87.5px;top:294.9px;color:#7a7a7a">Ε</span>
<span class="gk" style="left:107px;top:294.9px;color:#7a7a7a">Ζ</span>
<span class="gk" style="left:9.5px;top:315.9px;color:#7a7a7a">Η</span>
<span class="gk" style="left:29px;top:315.9px;color:#7a7a7a">Θ</span>
<span class="gk" style="left:48.5px;top:315.9px;color:#7a7a7a">Ι</span>
<span class="gk" style="left:68px;top:315.9px;color:#7a7a7a">Κ</span>
<span class="gk" style="left:87.5px;top:315.9px;color:#7a7a7a">Λ</span>
<span class="gk" style="left:107px;top:315.9px;color:#7a7a7a">Μ</span>
<span class="gk" style="left:9.5px;top:336.9px;color:#7a7a7a">Ν</span>
<span class="gk" style="left:29px;top:336.9px;color:#7a7a7a">Ξ</span>
<span class="gk" style="left:48.5px;top:336.9px;color:#7a7a7a">Ο</span>
<span class="gk" style="left:68px;top:336.9px;color:#7a7a7a">Π</span>
<span class="gk" style="left:87.5px;top:336.9px;color:#7a7a7a">Ρ</span>
<span class="gk" style="left:107px;top:336.9px;color:#7a7a7a">Σ</span>
<span class="gk" style="left:9.5px;top:357.9px;color:#7a7a7a">Τ</span>
<span class="gk" style="left:29px;top:357.9px;color:#7a7a7a">ϒ</span>
<span class="gk" style="left:48.5px;top:357.9px;color:#7a7a7a">Υ</span>
<span class="gk" style="left:68px;top:357.9px;color:#7a7a7a">Φ</span>
<span class="gk" style="left:87.5px;top:357.9px;color:#7a7a7a">Χ</span>
<span class="gk" style="left:107px;top:357.9px;color:#7a7a7a">Ψ</span>
<span class="gk" style="left:9.5px;top:378.9px;color:#7a7a7a">Ω</span>
<span class="gk" style="left:29px;top:378.9px;color:#7a7a7a">α</span>
<span class="gk" style="left:48.5px;top:378.9px;color:#7a7a7a">β</span>
<span class="gk" style="left:68px;top:378.9px;color:#7a7a7a">γ</span>
<span class="gk" style="left:87.5px;top:378.9px;color:#7a7a7a">δ</span>
<span class="gk" style="left:107px;top:378.9px;color:#7a7a7a">ϵ</span>
<span class="gk" style="left:9.5px;top:399.9px;color:#7a7a7a">ε</span>
<span class="gk" style="left:29px;top:399.9px;color:#7a7a7a">ζ</span>
<span class="gk" style="left:48.5px;top:399.9px;color:#7a7a7a">η</span>
<span class="gk" style="left:68px;top:399.9px;color:#7a7a7a">θ</span>
<span class="gk" style="left:87.5px;top:399.9px;color:#7a7a7a">ϑ</span>
<span class="gk" style="left:107px;top:399.9px;color:#7a7a7a">ι</span>
<span class="gk" style="left:9.5px;top:420.9px;color:#7a7a7a">κ</span>
<span class="gk" style="left:29px;top:420.9px;color:#7a7a7a">ϰ</span>
<span class="gk" style="left:48.5px;top:420.9px;color:#7a7a7a">λ</span>
<span class="gk" style="left:68px;top:420.9px;color:#7a7a7a">μ</span>
<span class="gk" style="left:87.5px;top:420.9px;color:#7a7a7a">ν</span>
<span class="gk" style="left:107px;top:420.9px;color:#7a7a7a">ξ</span>
<span class="gk" style="left:9.5px;top:441.9px;color:#7a7a7a">ο</span>
<span class="gk" style="left:29px;top:441.9px;color:#7a7a7a">π</span>
<span class="gk" style="left:48.5px;top:441.9px;color:#7a7a7a">ϖ</span>
<span class="gk" style="left:68px;top:441.9px;color:#7a7a7a">ρ</span>
<span class="gk" style="left:87.5px;top:441.9px;color:#7a7a7a">ϱ</span>
<span class="gk" style="left:107px;top:441.9px;color:#7a7a7a">σ</span>
<span class="gk" style="left:9.5px;top:462.9px;color:#7a7a7a">ς</span>
<span class="gk" style="left:29px;top:462.9px;color:#7a7a7a">τ</span>
<span class="gk" style="left:48.5px;top:462.9px;color:#7a7a7a">υ</span>
<span class="gk" style="left:68px;top:462.9px;color:#7a7a7a">ϕ</span>
<span class="gk" style="left:87.5px;top:462.9px;color:#7a7a7a">φ</span>
<span class="gk" style="left:107px;top:462.9px;color:#7a7a7a">χ</span>
<span class="gk" style="left:48.5px;top:483.9px;color:#7a7a7a">ψ</span>
<span class="gk" style="left:68px;top:483.9px;color:#7a7a7a">ω</span>
</div></div>
<div class="vs" style="left:134px;top:64px;height:519px;background:#f5f5f3;border-right:1px solid #d4d8ea"></div>
<div class="thumb" style="left:134px;top:75px;width:11px;height:391px"></div>
<div class="sbtn" style="left:134px;top:64px"></div><svg class="abs" style="left:134px;top:64px" width="11" height="11" viewBox="0 0 11 11"><path d="M2.5 7 L5.5 4 L8.5 7" fill="none" stroke="#4a5fb0" stroke-width="1.8"/></svg>
<div class="sbtn" style="left:134px;top:571px"></div><svg class="abs" style="left:134px;top:571px" width="11" height="11" viewBox="0 0 11 11"><path d="M2.5 4 L5.5 7 L8.5 4" fill="none" stroke="#4a5fb0" stroke-width="1.8"/></svg>
<div class="abs" style="left:137px;top:268px;width:5px;height:1px;background:#eef2fd;box-shadow:0 2px 0 #eef2fd,0 4px 0 #eef2fd"></div>
<svg class="abs" style="left:147px;top:64px" width="6" height="20" viewBox="0 0 6 20"><path d="M5 1v7l-4-3.5z M1 10v7l4-3.5z" fill="#000"/></svg>
<svg class="abs" style="left:470px;top:64px" width="7" height="20" viewBox="0 0 7 20"><path d="M5.5 1v7l-4-3.5z M1.5 10v7l4-3.5z" fill="#000"/></svg>
<div class="abs" style="left:153px;top:63px;width:317px;height:520px;border:1px solid #a4a49e;border-bottom:0;background:#ece9d8"></div>
<div class="abs" style="left:154px;top:64px;width:315px;height:13px;background:linear-gradient(#fafafa,#e6e6e4 50%,#c4c4c0);border-bottom:1px solid #9a9a94"></div>
<div class="abs" style="left:155px;top:64px;width:59px;height:13px;font-size:8.2px;line-height:12px;padding-left:5px;white-space:pre">Untitled (1)</div>
<svg class="abs" style="left:201px;top:65px" width="11" height="11" viewBox="0 0 11 11"><circle cx="5.5" cy="5.5" r="4.8" fill="#a4a4a0"/><path d="M3.5 3.5l4 4M7.5 3.5l-4 4" stroke="#fff" stroke-width="1.4"/></svg>
<div class="abs" style="left:214px;top:64px;width:118px;height:13px;background:#4f80d8;color:#dfe8fa;font-size:8.2px;line-height:12px;padding-left:5px;white-space:pre">sine-cosine-animation.mws</div>
<svg class="abs" style="left:319px;top:65px" width="11" height="11" viewBox="0 0 11 11"><circle cx="5.5" cy="5.5" r="4.8" fill="#1e2e7a"/><path d="M3.5 3.5l4 4M7.5 3.5l-4 4" stroke="#fff" stroke-width="1.4"/></svg>
<div class="abs" style="left:319.5px;top:80px;width:54.5px;height:12px;border-radius:6px;background:#8fa2c4"></div>
<div class="ctx"><span style="left:166px;">Text</span><span style="left:202px;">Math</span><span style="left:240.5px;color:#222">Drawing</span><span style="left:292.5px;color:#222">Plot</span><span style="left:328px;color:#f2f4fa">Animation</span><span style="left:439.5px;color:#222">Hide</span></div>
<div class="abs" style="left:154px;top:116.5px;width:315px;height:466.5px;background:#fff"></div>
<div class="vs" style="left:458px;top:117px;height:454px"></div>
<div class="sbtn" style="left:458px;top:118px"></div><svg class="abs" style="left:458px;top:118px" width="11" height="11" viewBox="0 0 11 11"><path d="M2.5 7 L5.5 4 L8.5 7" fill="none" stroke="#4a5fb0" stroke-width="1.8"/></svg>
<div class="sbtn" style="left:458px;top:558px"></div><svg class="abs" style="left:458px;top:558px" width="11" height="11" viewBox="0 0 11 11"><path d="M2.5 4 L5.5 7 L8.5 4" fill="none" stroke="#4a5fb0" stroke-width="1.8"/></svg>
<div class="abs" style="left:154px;top:571px;width:304px;height:12px;background:#f4f5fb"></div>
<div class="abs" style="left:458px;top:571px;width:11px;height:12px;background:#ece9d8"></div>
<div class="sbtn" style="left:155px;top:571px"></div><svg class="abs" style="left:155px;top:571px" width="11" height="11" viewBox="0 0 11 11"><path d="M7 2.5 L4 5.5 L7 8.5" fill="none" stroke="#4a5fb0" stroke-width="1.8"/></svg>
<div class="sbtn" style="left:445px;top:571px"></div><svg class="abs" style="left:445px;top:571px" width="11" height="11" viewBox="0 0 11 11"><path d="M4 2.5 L7 5.5 L4 8.5" fill="none" stroke="#4a5fb0" stroke-width="1.8"/></svg>
<svg class="abs" style="left:155px;top:95px" width="314" height="20" viewBox="155 95 314 20"><path d="M163.5 98.5 v10" stroke="#8a7a10" stroke-width="1.6"/><path d="M171.5 98.5 v10 l-6-5z" fill="#e8c818" stroke="#8a7a10" stroke-width="0.9"/><rect x="178.5" y="99.5" width="8" height="8" fill="#c4c2b8" stroke="#8e8c84" stroke-width="1.2"/><path d="M194 98.5 v10 l8-5z" fill="#e8c818" stroke="#8a7a10" stroke-width="1"/><path d="M210.5 98.5 v10 l6-5z" fill="#c4c2b8" stroke="#8e8c84" stroke-width="0.9"/><path d="M218.5 98.5 v10" stroke="#8e8c84" stroke-width="1.6"/><rect x="282.5" y="95.5" width="34" height="17" fill="#fff" stroke="#b8b6aa" stroke-width="1"/><path d="M323 103.5 h77" stroke="#222" stroke-width="1"/><path d="M397.5 97 h7 v13.5 h-7z" fill="#ece9d8"/><path d="M397.5 97.5 h6.5" stroke="#fff" stroke-width="1"/><path d="M404.5 97 v13.5 h-8" fill="none" stroke="#333" stroke-width="1.2"/><path d="M411 98.5 v10 M414 98.5 v10" stroke="#8a7a10" stroke-width="1.5"/><path d="M416 99.5 v8 l5-4z" fill="#e8c818" stroke="#8a7a10" stroke-width="0.8"/><path d="M425 102.5 h6 l-3 3.5z" fill="#4a5a9a"/><path d="M455 96.5 v5.5 l4-2.75z" fill="#000"/><path d="M460 103.5 v5.5 l-4-2.75z" fill="#9a988c"/></svg>
<span class="abs" style="left:222px;top:98px;font-size:7.8px;line-height:10px;white-space:pre">Current Frame:</span>
<span class="abs" style="left:285px;top:99px;font-size:8px;line-height:10px">25</span>
<div class="doc"><div class="abs" style="left:-154px;top:-116.5px;width:480px;height:600px">
<span class="abs" style="left:300px;top:116px;font:italic bold 13.5px 'Liberation Serif',serif;line-height:15px;white-space:pre">Sine Function</span>
<svg class="abs" style="left:155px;top:170px" width="303" height="165" viewBox="155 170 303 165" font-family="Liberation Sans,sans-serif" font-size="8.3"><circle cx="217.5" cy="221" r="34" fill="none" stroke="#2828b8" stroke-width="1.2"/><path d="M285.5 221 L286.9 219.6 L288.4 218.1 L289.8 216.7 L291.2 215.3 L292.7 213.9 L294.1 212.5 L295.5 211.1 L297 209.7 L298.4 208.4 L299.8 207.1 L301.3 205.8 L302.7 204.5 L304.1 203.3 L305.6 202.1 L307 200.9 L308.4 199.8 L309.9 198.7 L311.3 197.6 L312.7 196.6 L314.2 195.6 L315.6 194.7 L317 193.8 L318.5 193 L319.9 192.2 L321.3 191.4 L322.8 190.8 L324.2 190.1 L325.6 189.6 L327.1 189 L328.5 188.6 L329.9 188.2 L331.4 187.8 L332.8 187.5 L334.2 187.3 L335.7 187.2 L337.1 187 L338.5 187 L340 187 L341.4 187.1 L342.8 187.2 L344.3 187.4 L345.7 187.7 L347.1 188 L348.6 188.4 L350 188.8 L351.4 189.3 L352.9 189.8 L354.3 190.4 L355.7 191.1 L357.2 191.8 L358.6 192.6 L360.1 193.4 L361.5 194.2 L362.9 195.1 L364.4 196.1 L365.8 197.1 L367.2 198.1 L368.7 199.2 L370.1 200.3 L371.5 201.5 L373 202.7 L374.4 203.9 L375.8 205.1 L377.3 206.4 L378.7 207.7 L380.1 209.1 L381.6 210.4 L383 211.8 L384.4 213.2 L385.9 214.6 L387.3 216 L388.7 217.4 L390.2 218.8 L391.6 220.3 L393 221.7 L394.5 223.1 L395.9 224.6 L397.3 226 L398.8 227.4 L400.2 228.8 L401.6 230.2 L403.1 231.6 L404.5 232.9 L405.9 234.3 L407.4 235.6 L408.8 236.8 L410.2 238.1 L411.7 239.3 L413.1 240.5 L414.5 241.7 L416 242.8 L417.4 243.9 L418.8 244.9 L420.3 245.9 L421.7 246.9 L423.1 247.8 L424.6 248.6 L426 249.4 L427.4 250.2 L428.9 250.9 L430.3 251.6 L431.7 252.2 L433.2 252.7 L434.6 253.2 L436 253.6 L437.5 254 L438.9 254.3 L440.3 254.6 L441.8 254.8 L443.2 254.9 L444.6 255 L446.1 255 L447.5 255 L448.9 254.8 L450.4 254.7 L451.8 254.5 L453.2 254.2 L454.7 253.8 L456.1 253.4 L457.5 253" fill="none" stroke="#2828b8" stroke-width="1.2"/><path d="M183 221.5 H458 M285.5 187 V255.5" stroke="#000" stroke-width="1.1"/><path d="M183.5 221 v3 M217.5 221 v3 M251.5 221 v3 M319.5 221 v3 M353.5 221 v3 M387.5 221 v3 M421.5 221 v3 M455.5 221 v3 M183.5 221 v1.5 M200.5 221 v1.5 M217.5 221 v1.5 M234.5 221 v1.5 M251.5 221 v1.5 M268.5 221 v1.5 M285.5 221 v1.5 M302.5 221 v1.5 M319.5 221 v1.5 M336.5 221 v1.5 M353.5 221 v1.5 M370.5 221 v1.5 M387.5 221 v1.5 M404.5 221 v1.5 M421.5 221 v1.5 M438.5 221 v1.5 M455.5 221 v1.5 M285.5 255 h-3.5 M285.5 251.6 h-2 M285.5 248.2 h-2 M285.5 244.8 h-2 M285.5 241.4 h-2 M285.5 238 h-3.5 M285.5 234.6 h-2 M285.5 231.2 h-2 M285.5 227.8 h-2 M285.5 224.4 h-2 M285.5 221 h-3.5 M285.5 217.6 h-2 M285.5 214.2 h-2 M285.5 210.8 h-2 M285.5 207.4 h-2 M285.5 204 h-3.5 M285.5 200.6 h-2 M285.5 197.2 h-2 M285.5 193.8 h-2 M285.5 190.4 h-2 M285.5 187 h-3.5 " stroke="#000" stroke-width="0.7"/><text x="182" y="235" text-anchor="middle">-3</text><text x="216" y="235" text-anchor="middle">-2</text><text x="250" y="235" text-anchor="middle">-1</text><text x="319.5" y="235" text-anchor="middle">1</text><text x="353.5" y="235" text-anchor="middle">2</text><text x="387.5" y="235" text-anchor="middle">3</text><text x="421.5" y="235" text-anchor="middle">4</text><text x="455.5" y="235" text-anchor="middle">5</text><text x="280.5" y="190" text-anchor="end">1</text><text x="280.5" y="207" text-anchor="end">0.5</text><text x="283" y="233" text-anchor="end">0</text><text x="280.5" y="241" text-anchor="end">-0.5</text><text x="280.5" y="258" text-anchor="end">-1</text><rect x="234.5" y="309.5" width="208" height="15" fill="#fff" stroke="#000" stroke-width="1.1"/><path d="M238 316.8h24" stroke="#2222b8" stroke-width="1.2"/><path d="M306 316.8h25" stroke="#000" stroke-width="1.1"/><path d="M375 316.8h25" stroke="#c81e1e" stroke-width="1.2"/><g font-family="Liberation Serif,serif" font-size="10.9"><text x="266" y="321">Curve 1</text><text x="335" y="321">Curve 2</text><text x="404" y="321">Curve 3</text></g></svg>
<svg class="abs" style="left:170px;top:345px" width="10" height="104" viewBox="170 345 10 104"><path d="M178 347.5 h-5 V446.5 h5" fill="none" stroke="#000" stroke-width="1.2"/></svg>
<div class="abs" style="left:178px;top:351.2px;font:13.45px 'Liberation Serif',serif;line-height:15.7px;white-space:pre;color:#000">•</div>
<div class="abs" style="left:185px;top:351.2px;font:13.45px 'Liberation Serif',serif;line-height:15.7px;white-space:pre;color:#000;-webkit-text-stroke:0.25px #000">This animation shows the generation of the<br>graphs of both the sine and cosine functions.<br>Note that the angle, in radians, is represented by<br>the length of the arc on the unit circle. So the<br>sine function is the y-coordinate (blue) as a<br>function of the angle (red)</div>
<span class="abs" style="left:287.5px;top:463px;font:italic 14px 'Liberation Serif',serif;line-height:16px;white-space:pre">ANIMATION</span>
<svg class="abs" style="left:155px;top:476px" width="303" height="95" viewBox="155 476 303 95"><path d="M242 482.5 H458" stroke="#f0c4c8" stroke-width="1" stroke-dasharray="9 3"/><path d="M212 512.5 H272" stroke="#b8a8a8" stroke-width="1" stroke-dasharray="9 3"/><path d="M272 512.5 H458" stroke="#c2bebe" stroke-width="1"/><path d="M272.5 482 V543" stroke="#ceb6b6" stroke-width="1"/><path d="M212.5 513 V571" stroke="#bcb8b8" stroke-width="1" stroke-dasharray="8 3"/><path d="M242.5 483 V571" stroke="#f0b8c0" stroke-width="1" stroke-dasharray="8 3"/><path d="M272.5 482.5 L274.4 482.6 L276.2 482.7 L278.1 483 L279.9 483.4 L281.8 484 L283.6 484.6 L285.4 485.4 L287.3 486.2 L289.1 487.2 L291 488.2 L292.9 489.4 L294.7 490.6 L296.6 492 L298.4 493.4 L300.2 494.9 L302.1 496.4 L303.9 498 L305.8 499.7 L307.6 501.5 L309.5 503.2 L311.4 505 L313.2 506.9 L315.1 508.7 L316.9 510.6 L318.8 512.5 L320.6 514.4 L322.4 516.3 L324.3 518.1 L326.1 520 L328 521.8 L329.9 523.5 L331.7 525.3 L333.6 527 L335.4 528.6 L337.2 530.1 L339.1 531.6 L340.9 533 L342.8 534.4 L344.6 535.6 L346.5 536.8 L348.4 537.8 L350.2 538.8 L352.1 539.6 L353.9 540.4 L355.8 541 L357.6 541.6 L359.4 542 L361.3 542.3 L363.1 542.4 L365 542.5 L366.9 542.4 L368.7 542.3 L370.6 542 L372.4 541.6 L374.2 541 L376.1 540.4 L377.9 539.6 L379.8 538.8 L381.6 537.8 L383.5 536.8 L385.4 535.6 L387.2 534.4 L389.1 533 L390.9 531.6 L392.8 530.1 L394.6 528.6 L396.4 527 L398.3 525.3 L400.1 523.5 L402 521.8 L403.9 520 L405.7 518.1 L407.6 516.3 L409.4 514.4 L411.2 512.5 L413.1 510.6 L414.9 508.7 L416.8 506.9 L418.6 505 L420.5 503.2 L422.4 501.5 L424.2 499.7 L426.1 498 L427.9 496.4 L429.8 494.9 L431.6 493.4 L433.4 492 L435.3 490.6 L437.1 489.4 L439 488.2 L440.9 487.2 L442.7 486.2 L444.6 485.4 L446.4 484.6 L448.2 484 L450.1 483.4 L451.9 483 L453.8 482.7 L455.6 482.6 L457.5 482.5" fill="none" stroke="#222" stroke-width="1"/><path d="M181.5 540 L240 481.5" stroke="#4a4a4a" stroke-width="4.6" stroke-linecap="butt"/><path d="M182 539.5 L239.5 482" stroke="#b4b4b4" stroke-width="2.4"/><text x="371" y="502" font-family="Liberation Mono,monospace" font-weight="bold" font-size="10.5" fill="#28c828">cos</text><text x="397" y="502" font-family="Liberation Mono,monospace" font-weight="bold" font-size="10.5" fill="#d02020">θ</text></svg>
</div></div>
<div class="thumb" style="left:458px;top:193px;width:11px;height:165px"></div>
<div class="abs" style="left:461px;top:280px;width:5px;height:1px;background:#eef2fd;box-shadow:0 2px 0 #eef2fd,0 4px 0 #eef2fd"></div>
<div class="thumb" style="left:167px;top:571px;width:234px;height:11px"></div>
<div class="abs" style="left:283px;top:574px;width:1px;height:5px;background:#eef2fd;box-shadow:2px 0 0 #eef2fd,4px 0 0 #eef2fd"></div>
<div class="abs" style="left:3px;top:583px;width:474px;height:14px;background:#ece9d8"></div>
<div class="abs" style="left:9px;top:588.3px;width:5px;height:5px;border-radius:3px;background:#000"></div>
<span class="st" style="left:18px">Ready</span>
<span class="st" style="left:321px">Memory: 0.87M   Time: 0.23s   Text Mode</span>
</div>
</body></html>
